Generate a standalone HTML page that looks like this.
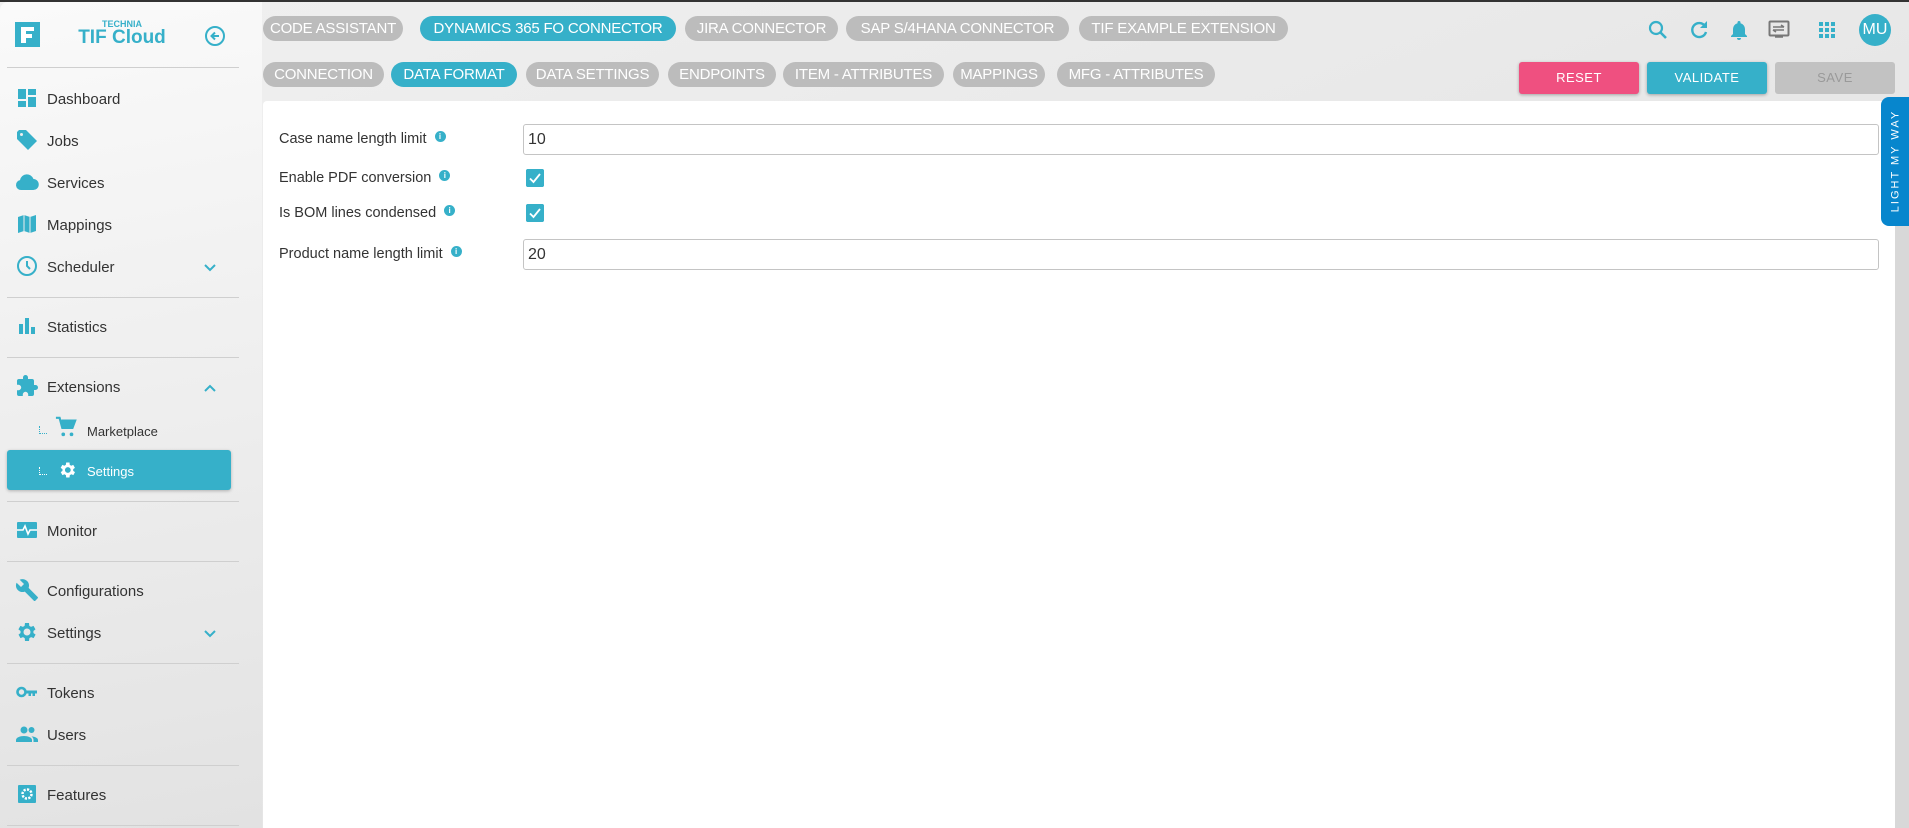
<!DOCTYPE html>
<html><head><meta charset="utf-8">
<style>
*{box-sizing:border-box;margin:0;padding:0}
body{width:1909px;height:828px;overflow:hidden;font-family:"Liberation Sans",sans-serif;background:linear-gradient(160deg,#f0f0f0,#dedede);position:relative}
.topbar{position:absolute;left:0;top:0;width:1909px;height:2px;background:#333}
.side{position:absolute;left:0;top:2px;width:262px;height:826px;background:linear-gradient(170deg,#fafafa,#e2e2e2);border-top-left-radius:8px}
.div{position:absolute;left:7px;width:232px;height:1px;background:#cfcfcf}
.it{position:absolute;left:47px;font-size:15px;color:#333;line-height:18px}
.ic{position:absolute;left:15px;width:24px;height:24px}
.chev{position:absolute;left:203px;width:14px;height:14px}
.chip{position:absolute;height:25px;border-radius:13px;background:#bcbcbc;color:#fff;font-size:15px;line-height:25px;text-align:center;white-space:nowrap;letter-spacing:-0.2px}
.chip.on{background:#36b0c9}
.btn{position:absolute;top:62px;height:32px;width:120px;border-radius:3px;color:#fff;font-size:13px;line-height:32px;text-align:center;letter-spacing:.5px;box-shadow:0 1px 3px rgba(0,0,0,.3)}
.panel{position:absolute;left:263px;top:101px;width:1632px;height:727px;background:#fff;border-top-left-radius:4px}
.lbl{position:absolute;left:279px;font-size:14.5px;color:#333}
.info{display:inline-block;width:11px;height:11px;border-radius:50%;background:#36b0c9;color:#fff;font-size:8px;line-height:11px;text-align:center;font-weight:bold;vertical-align:4px;margin-left:8px}
.inp{position:absolute;left:523px;width:1356px;height:31px;border:1px solid #c4c4c4;border-radius:3px;font-size:16px;color:#333;padding-left:4px;line-height:29px}
.cb{position:absolute;left:526px;width:18px;height:18px;background:#36b0c9;border-radius:2px}
.hi{position:absolute;top:18px;width:24px;height:24px}
</style></head><body>
<div class="topbar"></div>
<div class="side">
  <svg style="position:absolute;left:15px;top:20px" width="25" height="25" viewBox="0 0 25 25"><rect width="25" height="25" fill="#36b0c9"/><path d="M6 5h13v4h-8v3h6v4h-6v5h-5z" fill="#fff"/></svg>
  <div style="position:absolute;left:80px;top:17px;width:84px;text-align:center;font-size:9px;font-weight:bold;color:#36b0c9">TECHNIA</div>
  <div style="position:absolute;left:67px;top:25px;width:110px;text-align:center;font-size:19px;font-weight:bold;color:#36b0c9">TIF Cloud</div>
  <svg style="position:absolute;left:204px;top:23px" width="22" height="22" viewBox="0 0 22 22"><circle cx="11" cy="11" r="9" fill="none" stroke="#36b0c9" stroke-width="2"/><path d="M15 11H8M11 7.5L7.5 11 11 14.5" fill="none" stroke="#36b0c9" stroke-width="2"/></svg>
  <div class="div" style="top:65px"></div>
  <svg class="ic" style="top:84px" viewBox="0 0 24 24"><path d="M3 3h8v10H3zM13 3h8v6h-8zM13 11h8v10h-8zM3 15h8v6H3z" fill="#36b0c9"/></svg>
  <div class="it" style="top:89px">Dashboard</div>
  <svg class="ic" style="top:126px" viewBox="0 0 24 24"><path d="M2 4v7l11 11 9-9L11 2H4z" fill="#36b0c9"/><circle cx="6.5" cy="6.5" r="1.5" fill="#eee"/></svg>
  <div class="it" style="top:131px">Jobs</div>
  <svg class="ic" style="top:168px" viewBox="0 0 24 24"><path d="M6 20a5 5 0 0 1-1-9.9A7 7 0 0 1 18.5 9 5.5 5.5 0 0 1 18 20z" fill="#36b0c9"/></svg>
  <div class="it" style="top:173px">Services</div>
  <svg class="ic" style="top:210px" viewBox="0 0 24 24"><path d="M3 5l6-2 6 2 6-2v16l-6 2-6-2-6 2z" fill="#36b0c9"/><path d="M9 3v16M15 5v16" stroke="#eee" stroke-width="1"/></svg>
  <div class="it" style="top:215px">Mappings</div>
  <svg class="ic" style="top:252px" viewBox="0 0 24 24"><circle cx="12" cy="12" r="9" fill="none" stroke="#36b0c9" stroke-width="2"/><path d="M12 7v5l3 3" fill="none" stroke="#36b0c9" stroke-width="2"/></svg>
  <div class="it" style="top:257px">Scheduler</div>
  <svg class="chev" style="top:259px" viewBox="0 0 14 14"><path d="M2 4l5 5 5-5" fill="none" stroke="#36b0c9" stroke-width="2"/></svg>
  <div class="div" style="top:295px"></div>
  <svg class="ic" style="top:312px" viewBox="0 0 24 24"><path d="M4 10h4v10H4zM10 4h4v16h-4zM16 13h4v7h-4z" fill="#36b0c9"/></svg>
  <div class="it" style="top:317px">Statistics</div>
  <div class="div" style="top:355px"></div>
  <svg class="ic" style="top:372px" viewBox="0 0 24 24"><path d="M20.5 11H19V7a2 2 0 0 0-2-2h-4V3.5a2.5 2.5 0 0 0-5 0V5H4a2 2 0 0 0-2 2v3.8h1.5a2.7 2.7 0 0 1 0 5.4H2V20a2 2 0 0 0 2 2h3.8v-1.5a2.7 2.7 0 0 1 5.4 0V22H17a2 2 0 0 0 2-2v-4h1.5a2.5 2.5 0 0 0 0-5z" fill="#36b0c9"/></svg>
  <div class="it" style="top:377px">Extensions</div>
  <svg class="chev" style="top:379px" viewBox="0 0 14 14"><path d="M2 10l5-5 5 5" fill="none" stroke="#36b0c9" stroke-width="2"/></svg>
  <div style="position:absolute;left:39px;top:424px;width:8px;height:8px;border-left:1px dotted #36b0c9;border-bottom:1px dotted #36b0c9"></div>
  <svg style="position:absolute;left:55px;top:414px" width="22" height="22" viewBox="0 0 24 24"><path d="M1 2h4l3 11h11l3-8H7" fill="none" stroke="#36b0c9" stroke-width="2.4"/><path d="M7 5h15l-3 8H8z" fill="#36b0c9"/><circle cx="9" cy="20" r="2" fill="#36b0c9"/><circle cx="18" cy="20" r="2" fill="#36b0c9"/></svg>
  <div class="it" style="left:87px;top:421px;font-size:13px">Marketplace</div>
  <div style="position:absolute;left:7px;top:448px;width:224px;height:40px;background:#36b0c9;border-radius:3px;box-shadow:0 1px 3px rgba(0,0,0,.25)"></div>
  <div style="position:absolute;left:39px;top:465px;width:8px;height:8px;border-left:1px dotted #fff;border-bottom:1px dotted #fff"></div>
  <svg style="position:absolute;left:57px;top:458px" width="20" height="20" viewBox="0 0 24 24"><path d="M19.4 13a7.5 7.5 0 0 0 0-2l2.1-1.6-2-3.5-2.5 1a7.4 7.4 0 0 0-1.7-1L15 3h-4l-.4 2.9a7.4 7.4 0 0 0-1.7 1l-2.5-1-2 3.5L6.6 11a7.5 7.5 0 0 0 0 2l-2.1 1.6 2 3.5 2.5-1a7.4 7.4 0 0 0 1.7 1L11 21h4l.4-2.9a7.4 7.4 0 0 0 1.7-1l2.5 1 2-3.5zM13 15.5a3.5 3.5 0 1 1 0-7 3.5 3.5 0 0 1 0 7z" fill="#fff"/></svg>
  <div class="it" style="left:87px;top:461px;font-size:13px;color:#fff">Settings</div>
  <div class="div" style="top:499px"></div>
  <svg class="ic" style="top:516px" viewBox="0 0 24 24"><rect x="2" y="4" width="20" height="16" rx="1" fill="#36b0c9"/><path d="M2 12h6l2-4 3 8 2-4h7" fill="none" stroke="#fff" stroke-width="1.6"/></svg>
  <div class="it" style="top:521px">Monitor</div>
  <div class="div" style="top:559px"></div>
  <svg class="ic" style="top:576px" viewBox="0 0 24 24"><path d="M22.7 19l-9.1-9.1c.9-2.3.4-5-1.5-6.9-2-2-5-2.4-7.4-1.3L9 6 6 9 1.6 4.7C.4 7.1.9 10.1 2.9 12.1c1.9 1.9 4.6 2.4 6.9 1.5l9.1 9.1c.4.4 1 .4 1.4 0l2.3-2.3c.5-.4.5-1.1.1-1.4z" fill="#36b0c9"/></svg>
  <div class="it" style="top:581px">Configurations</div>
  <svg class="ic" style="top:618px" viewBox="0 0 24 24"><path d="M19.4 13a7.5 7.5 0 0 0 0-2l2.1-1.6-2-3.5-2.5 1a7.4 7.4 0 0 0-1.7-1L15 3h-4l-.4 2.9a7.4 7.4 0 0 0-1.7 1l-2.5-1-2 3.5L6.6 11a7.5 7.5 0 0 0 0 2l-2.1 1.6 2 3.5 2.5-1a7.4 7.4 0 0 0 1.7 1L11 21h4l.4-2.9a7.4 7.4 0 0 0 1.7-1l2.5 1 2-3.5zM13 15.5a3.5 3.5 0 1 1 0-7 3.5 3.5 0 0 1 0 7z" fill="#36b0c9" transform="translate(-1 0)"/></svg>
  <div class="it" style="top:623px">Settings</div>
  <svg class="chev" style="top:625px" viewBox="0 0 14 14"><path d="M2 4l5 5 5-5" fill="none" stroke="#36b0c9" stroke-width="2"/></svg>
  <div class="div" style="top:661px"></div>
  <svg class="ic" style="top:678px" viewBox="0 0 24 24"><circle cx="6.5" cy="12" r="4" fill="none" stroke="#36b0c9" stroke-width="2.6"/><path d="M10 10.5h12v3h-2v2.5h-2.5v-2.5h-1.5v2.5h-2.5v-2.5H10z" fill="#36b0c9"/></svg>
  <div class="it" style="top:683px">Tokens</div>
  <svg class="ic" style="top:720px" viewBox="0 0 24 24"><circle cx="9" cy="8" r="3.5" fill="#36b0c9"/><circle cx="16.5" cy="8" r="3" fill="#36b0c9"/><path d="M1 20v-2c0-2.5 4-4 8-4s8 1.5 8 4v2zM18.5 20v-2c0-1.5-.7-2.7-2-3.6 3 .2 6.5 1.5 6.5 3.6v2z" fill="#36b0c9"/></svg>
  <div class="it" style="top:725px">Users</div>
  <div class="div" style="top:763px"></div>
  <svg class="ic" style="top:780px" viewBox="0 0 24 24"><rect x="3" y="3" width="18" height="18" rx="1" fill="#36b0c9"/><circle cx="12" cy="12" r="4.5" fill="none" stroke="#fff" stroke-width="2.5" stroke-dasharray="2.2 1.3"/><circle cx="12" cy="12" r="1.8" fill="#36b0c9"/></svg>
  <div class="it" style="top:785px">Features</div>
  <div class="div" style="top:823px"></div>
</div>

<div class="chip" style="left:263px;top:16px;width:140px">CODE ASSISTANT</div>
<div class="chip on" style="left:420px;top:16px;width:256px">DYNAMICS 365 FO CONNECTOR</div>
<div class="chip" style="left:685px;top:16px;width:153px">JIRA CONNECTOR</div>
<div class="chip" style="left:846px;top:16px;width:223px">SAP S/4HANA CONNECTOR</div>
<div class="chip" style="left:1079px;top:16px;width:209px">TIF EXAMPLE EXTENSION</div>
<div class="chip" style="left:263px;top:62px;width:121px">CONNECTION</div>
<div class="chip on" style="left:391px;top:62px;width:126px">DATA FORMAT</div>
<div class="chip" style="left:526px;top:62px;width:133px">DATA SETTINGS</div>
<div class="chip" style="left:668px;top:62px;width:108px">ENDPOINTS</div>
<div class="chip" style="left:783px;top:62px;width:161px">ITEM - ATTRIBUTES</div>
<div class="chip" style="left:953px;top:62px;width:92px">MAPPINGS</div>
<div class="chip" style="left:1057px;top:62px;width:158px">MFG - ATTRIBUTES</div>

<svg class="hi" style="left:1646px" viewBox="0 0 24 24"><circle cx="10" cy="10" r="6" fill="none" stroke="#36b0c9" stroke-width="2.2"/><path d="M14.5 14.5L20 20" stroke="#36b0c9" stroke-width="2.6"/></svg>
<svg class="hi" style="left:1687px" viewBox="0 0 24 24"><path d="M18 8A7 7 0 1 0 19 14" fill="none" stroke="#36b0c9" stroke-width="2.4"/><path d="M20 3v7h-7z" fill="#36b0c9"/></svg>
<svg class="hi" style="left:1727px" viewBox="0 0 24 24"><path d="M12 3a1.5 1.5 0 0 1 1.5 1.5v.7A6 6 0 0 1 18 11v5l2 2v1H4v-1l2-2v-5a6 6 0 0 1 4.5-5.8v-.7A1.5 1.5 0 0 1 12 3zM10 20h4a2 2 0 0 1-4 0z" fill="#36b0c9"/></svg>
<svg class="hi" style="left:1767px" viewBox="0 0 24 24"><rect x="2.5" y="3.5" width="19" height="14" rx="1" fill="none" stroke="#777" stroke-width="2"/><path d="M6 9h11M14 7l3 2M6 12h11M6 12l3 2M8 19h8" stroke="#777" stroke-width="1.6" fill="none"/></svg>
<svg class="hi" style="left:1815px" viewBox="0 0 24 24"><g fill="#36b0c9"><rect x="4" y="4" width="4" height="4"/><rect x="10" y="4" width="4" height="4"/><rect x="16" y="4" width="4" height="4"/><rect x="4" y="10" width="4" height="4"/><rect x="10" y="10" width="4" height="4"/><rect x="16" y="10" width="4" height="4"/><rect x="4" y="16" width="4" height="4"/><rect x="10" y="16" width="4" height="4"/><rect x="16" y="16" width="4" height="4"/></g></svg>
<div style="position:absolute;left:1859px;top:14px;width:32px;height:32px;border-radius:50%;background:#36b0c9;color:#fff;font-size:16px;line-height:32px;text-align:center">MU</div>

<div class="btn" style="left:1519px;background:#ef5080">RESET</div>
<div class="btn" style="left:1647px;background:#36b0c9">VALIDATE</div>
<div class="btn" style="left:1775px;background:#c2c2c2;color:#9a9a9a;box-shadow:none">SAVE</div>

<div class="panel"></div>
<div style="position:absolute;left:1895px;top:101px;width:14px;height:727px;background:#d8d8d8"></div>
<div style="position:absolute;left:1881px;top:97px;width:28px;height:129px;background:#0786cd;border-radius:8px 0 0 8px"></div>
<div style="position:absolute;left:1831px;top:153px;width:129px;height:16px;transform:rotate(-90deg);color:#fff;font-size:11px;letter-spacing:2px;text-align:center;line-height:16px">LIGHT MY WAY</div>

<div class="lbl" style="top:131px">Case name length limit<span class="info">i</span></div>
<div class="inp" style="top:124px">10</div>
<div class="lbl" style="top:170px">Enable PDF conversion<span class="info">i</span></div>
<svg class="cb" style="top:169px" viewBox="0 0 18 18"><rect width="18" height="18" rx="2" fill="#36b0c9"/><path d="M4 9.5l3.5 3.5L14 5" fill="none" stroke="#fff" stroke-width="1.8"/></svg>
<div class="lbl" style="top:205px">Is BOM lines condensed<span class="info">i</span></div>
<svg class="cb" style="top:204px" viewBox="0 0 18 18"><rect width="18" height="18" rx="2" fill="#36b0c9"/><path d="M4 9.5l3.5 3.5L14 5" fill="none" stroke="#fff" stroke-width="1.8"/></svg>
<div class="lbl" style="top:246px">Product name length limit<span class="info">i</span></div>
<div class="inp" style="top:239px">20</div>
</body></html>
